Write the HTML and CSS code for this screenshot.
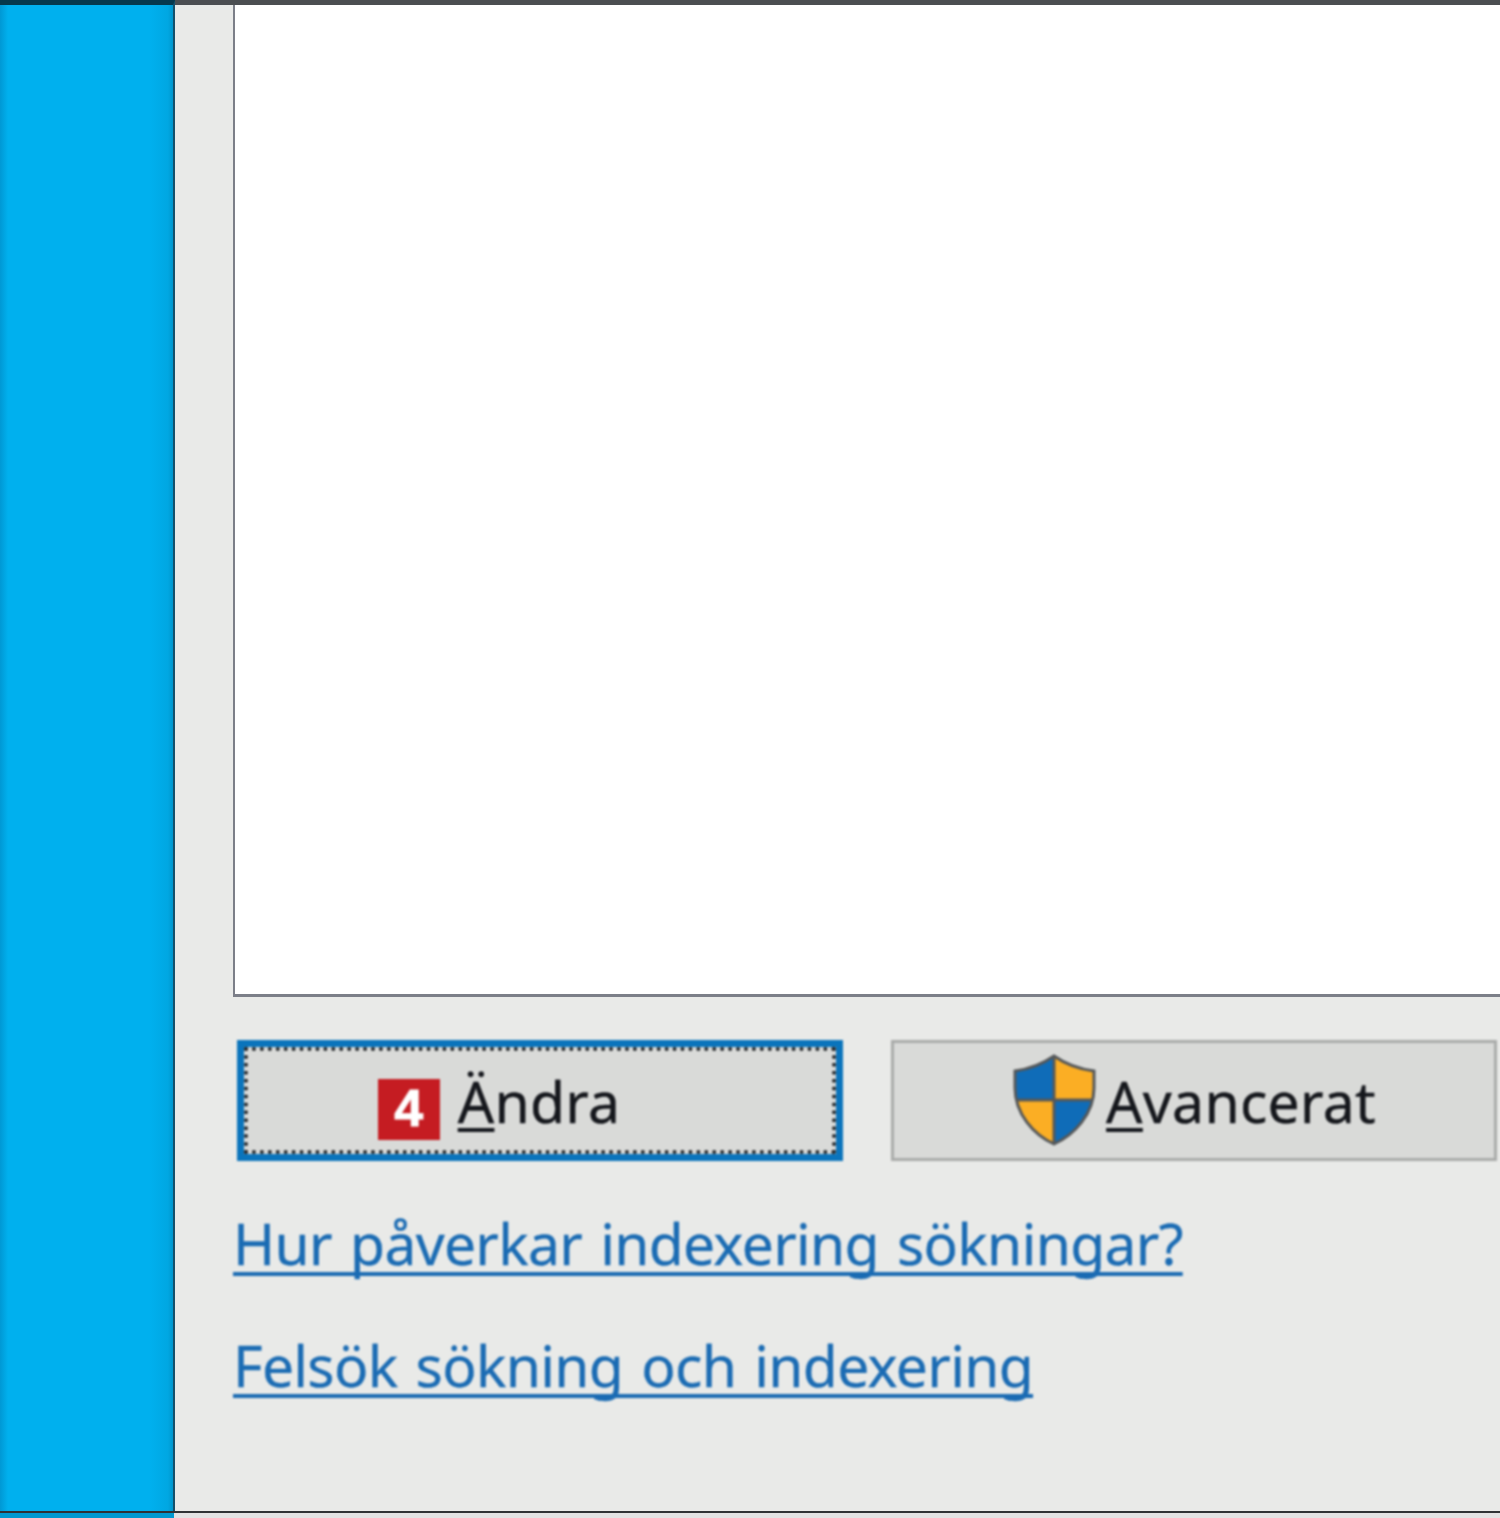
FILE: index.html
```html
<!DOCTYPE html>
<html lang="sv">
<head>
    <meta charset="UTF-8">
    <meta name="viewport" content="width=device-width, initial-scale=1.0">
    <title>Indexeringsalternativ</title>
    <link rel="stylesheet" href="styles.css">
</head>
<body>
    <div class="window">
        <aside class="sidebar"></aside>
        <main class="panel">
            <div class="list-box"></div>
            <div class="buttons">
                <button type="button" class="btn btn-focus">
                    <span class="focus-ring">
                        <span class="badge">4</span>
                        <span class="btn-label"><u>Ä</u>ndra</span>
                    </span>
                </button>
                <button type="button" class="btn">
                    <svg class="shield" viewBox="0 0 84 92" aria-hidden="true">
                        <path d="M42 2C32 9 18 15 3 17V34C3 60 22 81 42 90Z" fill="#0f6cb8"/>
                        <path d="M42 2C52 9 66 15 82 17V34C82 60 62 81 42 90Z" fill="#fbae24"/>
                        <path d="M5 46H42V90C25 82 9 66 5 46Z" fill="#fbae24"/>
                        <path d="M42 46H80C76 66 59 82 42 90Z" fill="#0f6cb8"/>
                        <path d="M42 2C32 9 18 15 3 17V34C3 60 22 81 42 90C62 81 82 60 82 34V17C66 15 52 9 42 2ZM42 2V90M5 46H80" fill="none" stroke="#55585a" stroke-width="3"/>
                    </svg>
                    <span class="btn-label"><u>A</u>vancerat</span>
                </button>
            </div>
            <a class="link" href="#">Hur påverkar indexering sökningar?</a>
            <a class="link" href="#">Felsök sökning och indexering</a>
        </main>
    </div>
</body>
</html>
```

FILE: styles.css
```css
html, body {
    margin: 0;
    padding: 0;
    height: 1518px;
    overflow: hidden;
}

body {
    background: linear-gradient(to right, #0099d0 174px, #e2e2e2 174px);
}

.window {
    display: flex;
    height: 1513px;
    box-sizing: border-box;
    border-bottom: 2px solid #2f3234;
}

.sidebar {
    width: 175px;
    flex-shrink: 0;
    box-sizing: border-box;
    background: linear-gradient(to right, #0098d4 0, #00b0ee 8px, #00b0ee 150px, #00a7e2 168px, #0092c8 174px);
    border-top: 5px solid #06384c;
    border-right: 2px solid #14506a;
}

.panel {
    flex: 1;
    min-width: 0;
    box-sizing: border-box;
    padding-left: 58px;
    background-color: #e9eae8;
    border-top: 5px solid #4b4e51;
    font-family: "Noto Sans", "Open Sans", sans-serif;
    font-size: 57px;
}

.list-box {
    height: 992px;
    margin-right: -40px;
    background: white;
    border-left: 2px solid #7c7f88;
    border-bottom: 3px solid #7c7f88;
    box-sizing: border-box;
}

.buttons {
    display: flex;
    gap: 48px;
    margin: 43px 0 0 4px;
    filter: blur(0.8px);
}

.btn {
    display: flex;
    align-items: center;
    justify-content: center;
    width: 606px;
    height: 121px;
    flex-shrink: 0;
    box-sizing: border-box;
    padding: 0;
    background-color: #d9dad8;
    border: 3px solid #a9abaa;
    font: inherit;
    color: #15171c;
}

.btn-focus {
    border: 7px solid #0a74bc;
}

.focus-ring {
    display: flex;
    align-items: center;
    justify-content: center;
    width: 100%;
    height: 100%;
    border: 4px dotted #22262a;
    box-sizing: border-box;
}

.btn-label {
    line-height: 1;
    position: relative;
    top: 1px;
    letter-spacing: 0.3px;
    -webkit-text-stroke: 0.4px #15171c;
}

.btn-label u {
    text-decoration-thickness: 4px;
    text-decoration-skip-ink: none;
    text-underline-offset: 5px;
}

.badge {
    width: 62px;
    height: 61px;
    margin: 17px 18px 0 -82px;
    background-color: #c51c22;
    color: white;
    font-family: "Liberation Sans", Arial, sans-serif;
    font-size: 52px;
    font-weight: bold;
    line-height: 59px;
    text-align: center;
    -webkit-text-stroke: 1px white;
}

.shield {
    width: 84px;
    height: 92px;
    margin: -2px 10px 0 0;
}

.link {
    display: block;
    width: max-content;
    color: #1a6bb3;
    line-height: 74px;
    letter-spacing: -0.7px;
    word-spacing: 4px;
    text-decoration-thickness: 4px;
    text-decoration-skip-ink: none;
    text-underline-offset: 7px;
    -webkit-text-stroke: 0.3px #1a6bb3;
    filter: blur(0.8px);
}

.buttons + .link {
    margin-top: 45px;
}

.link + .link {
    margin-top: 48px;
}
```
